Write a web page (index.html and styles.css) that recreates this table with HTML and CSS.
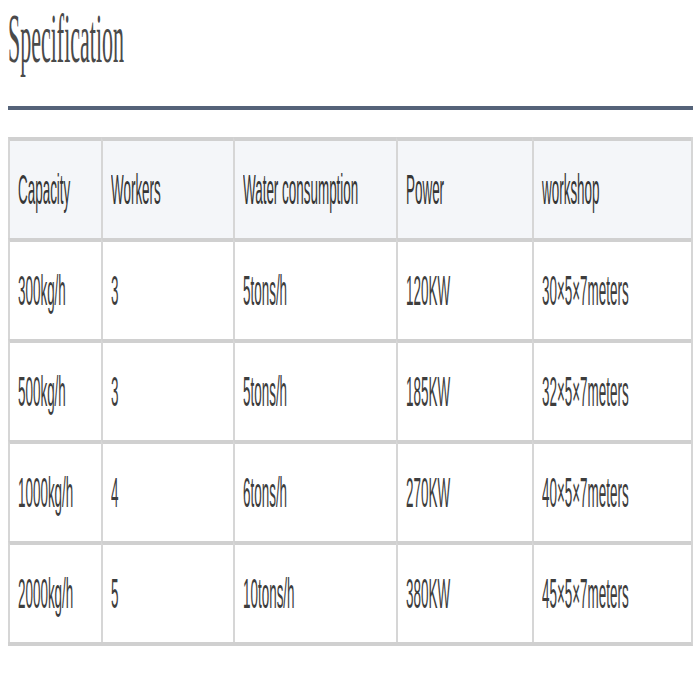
FILE: index.html
```html
<!DOCTYPE html>
<html lang="en">
<head>
<meta charset="utf-8">
<title>Specification</title>
<link rel="stylesheet" href="styles.css">
</head>
<body>
<h1 class="title"><span class="sq sq-title">Specification</span></h1>
<hr class="rule">
<table class="spec">
  <colgroup>
    <col class="c1"><col class="c2"><col class="c3"><col class="c4"><col class="c5">
  </colgroup>
  <thead>
    <tr>
      <th><span class="sq">Capacity</span></th>
      <th><span class="sq">Workers</span></th>
      <th><span class="sq">Water consumption</span></th>
      <th><span class="sq">Power</span></th>
      <th><span class="sq">workshop</span></th>
    </tr>
  </thead>
  <tbody>
    <tr>
      <td><span class="sq">300kg/h</span></td>
      <td><span class="sq">3</span></td>
      <td><span class="sq">5tons/h</span></td>
      <td><span class="sq">120KW</span></td>
      <td><span class="sq">30×5×7meters</span></td>
    </tr>
    <tr>
      <td><span class="sq">500kg/h</span></td>
      <td><span class="sq">3</span></td>
      <td><span class="sq">5tons/h</span></td>
      <td><span class="sq">185KW</span></td>
      <td><span class="sq">32×5×7meters</span></td>
    </tr>
    <tr>
      <td><span class="sq">1000kg/h</span></td>
      <td><span class="sq">4</span></td>
      <td><span class="sq">6tons/h</span></td>
      <td><span class="sq">270KW</span></td>
      <td><span class="sq">40×5×7meters</span></td>
    </tr>
    <tr>
      <td><span class="sq">2000kg/h</span></td>
      <td><span class="sq">5</span></td>
      <td><span class="sq">10tons/h</span></td>
      <td><span class="sq">380KW</span></td>
      <td><span class="sq">45×5×7meters</span></td>
    </tr>
  </tbody>
</table>
</body>
</html>
```

FILE: styles.css
```css
html, body {
  margin: 0;
  background: #ffffff;
}

body {
  padding: 0 7px 0 8px;
  overflow: hidden;
}

.sq {
  display: inline-block;
  white-space: nowrap;
  transform: scaleX(0.32);
  transform-origin: 0 50%;
}

.sq-title {
  transform: scaleX(0.314);
}

.title {
  margin: 0;
  padding-top: 4px;
  height: 70px;
  font-family: "Liberation Serif", serif;
  font-size: 70px;
  line-height: 70px;
  font-weight: normal;
  color: #4a4a4a;
  white-space: nowrap;
}

.rule {
  margin: 32px 0 0 0;
  height: 4px;
  border: 0;
  background: #556379;
}

.spec {
  margin-top: 27px;
  width: 685px;
  table-layout: fixed;
  border-collapse: separate;
  border-spacing: 0;
  border-right: 2px solid #d6d6d6;
  border-bottom: 4px solid #d0d0d0;
  font-family: "Liberation Sans", Arial, sans-serif;
  font-size: 42px;
  line-height: 42px;
  color: #3d3d3d;
}

.c1 { width: 93px; }
.c2 { width: 132px; }
.c3 { width: 163px; }
.c4 { width: 136px; }
.c5 { width: 159px; }

.spec th,
.spec td {
  box-sizing: border-box;
  height: 101px;
  padding: 0 0 0 8px;
  border-top: 4px solid #d0d0d0;
  border-left: 2px solid #d6d6d6;
  text-align: left;
  vertical-align: middle;
  font-weight: normal;
  overflow: hidden;
  white-space: nowrap;
}

.spec th {
  background: #f4f6f9;
  color: #363636;
}

.spec td {
  background: #ffffff;
}
```
